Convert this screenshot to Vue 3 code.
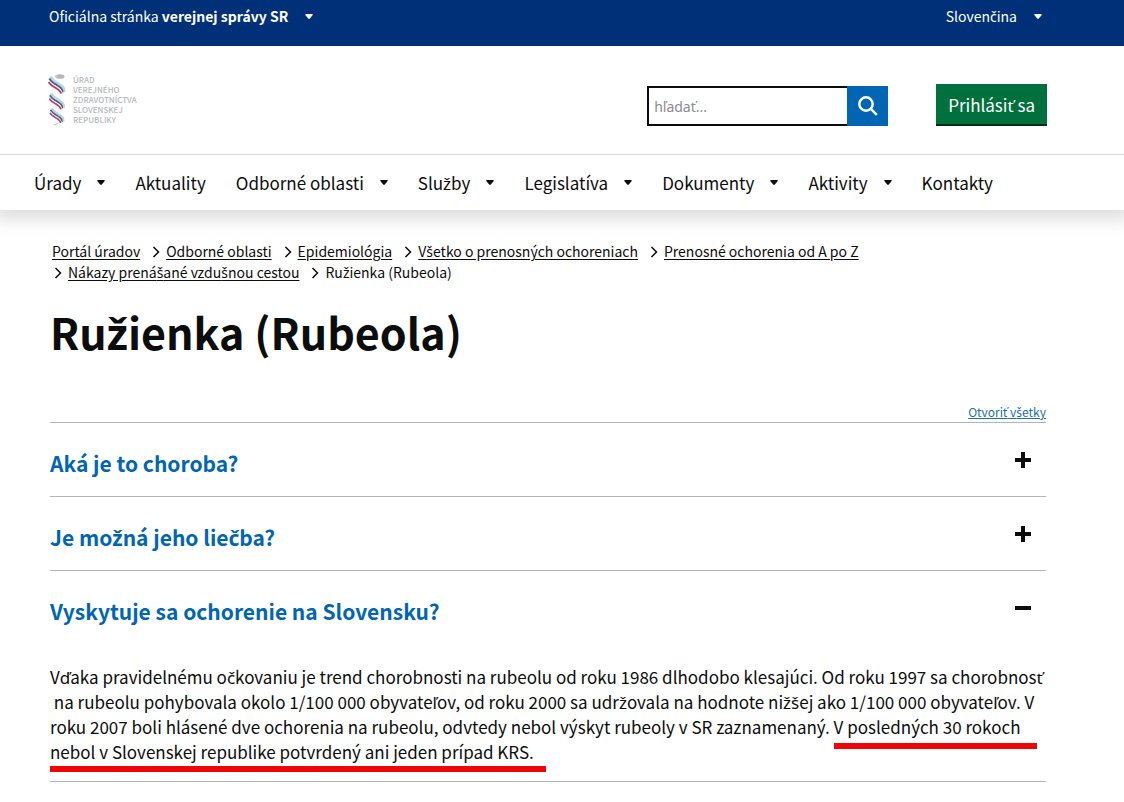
<script setup>
import { ref, h } from 'vue'

// The Latin set of the main face has no letters with a caron:
// those letters are set in a companion face of the same proportions.
const T = (props) =>
  props.s
    .split(/([čďěľňřšťžČĎĽŇŠŤŽ]+)/)
    .map((part, i) => (i % 2 ? h('span', { class: 'caron' }, part) : part))
T.props = ['s']

const query = ref('')

const menu = [
  { label: 'Úrady', sub: true },
  { label: 'Aktuality', sub: false },
  { label: 'Odborné oblasti', sub: true },
  { label: 'Služby', sub: true },
  { label: 'Legislatíva', sub: true },
  { label: 'Dokumenty', sub: true },
  { label: 'Aktivity', sub: true },
  { label: 'Kontakty', sub: false },
]

const crumbs = [
  'Portál úradov',
  'Odborné oblasti',
  'Epidemiológia',
  'Všetko o prenosných ochoreniach',
  'Prenosné ochorenia od A po Z',
  'Nákazy prenášané vzdušnou cestou',
]

const sections = ref([
  { title: 'Aká je to choroba?', open: false },
  { title: 'Je možná jeho liečba?', open: false },
  { title: 'Vyskytuje sa ochorenie na Slovensku?', open: true },
])

const answer = [
  'Vďaka pravidelnému očkovaniu je trend chorobnosti na rubeolu od roku 1986 dlhodobo klesajúci. Od roku 1997 sa chorobnosť',
  '\u00a0na rubeolu pohybovala okolo 1/100 000 obyvateľov, od roku 2000 sa udržovala na hodnote nižšej ako 1/100 000 obyvateľov. V',
]
</script>

<template>
  <div class="page">
    <div class="topbar">
      <button type="button" class="top-button">
        <span>Oficiálna stránka <b>verejnej správy SR</b></span>
        <svg class="caret" viewBox="0 0 8 5"><path d="M1 0h6q1.500 0 .5 1.200L4.800 4.500q-.8.800-1.600 0L.5 1.200Q-.5 0 1 0z" /></svg>
      </button>
      <button type="button" class="top-button">
        <span><T s="Slovenčina" /></span>
        <svg class="caret" viewBox="0 0 8 5"><path d="M1 0h6q1.500 0 .5 1.200L4.800 4.500q-.8.800-1.600 0L.5 1.200Q-.5 0 1 0z" /></svg>
      </button>
    </div>

    <header class="header">
      <a href="#" class="logo">
        <svg class="emblem" viewBox="0 0 18 52">
          <ellipse cx="12" cy="2.500" rx="4.500" ry="2.300" fill="#b4b8ba" />
          <path d="M7 1.500Q10 .5 9.500 2.500T7 3.500z" fill="#c6c9cb" />
          <g v-for="(y, i) in [0, 17, 32]" :key="y" :transform="`translate(${i * 0.7} ${y}) scale(${1 - i * 0.07})`" fill="none">
            <path d="M2.800 2.500C3.500 6 6.500 7.500 10.500 10s6 4 5.300 8" stroke="#bcd3e2" stroke-width="3.200" />
            <path d="M1.500 4.500C2.500 8 5.500 9.200 9.200 11.500s5.500 3.500 5.300 7" stroke="#3f608c" stroke-width="2" />
            <path d="M1 6.500c.8 2.600 3.600 3.800 7.200 6s5.300 3.300 5.500 6.500" stroke="#eef1f5" stroke-width="1.200" />
            <path d="M.8 8c.8 2.600 3.400 3.800 6.700 5.800s5.300 3 5.500 6" stroke="#b83f62" stroke-width="1.800" />
          </g>
          <path d="M10 49q-2 1.600-4 2" stroke="#bfc3c5" fill="none" />
        </svg>
        <span class="logo-text">ÚRAD<br>VEREJNÉHO<br>ZDRAVOTNÍCTVA<br>SLOVENSKEJ<br>REPUBLIKY</span>
      </a>
      <form class="search" role="search" @submit.prevent>
        <input v-model="query" type="text" placeholder="hľadať..." aria-label="hľadať">
        <button type="submit" aria-label="Hľadať">
          <svg viewBox="0 0 20 20"><circle cx="8" cy="8" r="6.700" /><path d="M12.800 12.800l6 6" /></svg>
        </button>
      </form>
      <button type="button" class="login"><T s="Prihlásiť sa" /></button>
    </header>

    <nav class="menu">
      <template v-for="item in menu" :key="item.label">
        <button v-if="item.sub" type="button" class="menu-item">
          <span><T :s="item.label" /></span>
          <svg class="caret" viewBox="0 0 8 5"><path d="M1 0h6q1.500 0 .5 1.200L4.800 4.500q-.8.800-1.600 0L.5 1.200Q-.5 0 1 0z" /></svg>
        </button>
        <a v-else href="#" class="menu-item">{{ item.label }}</a>
      </template>
    </nav>

    <main class="content">
      <ol class="crumbs">
        <li v-for="(crumb, i) in crumbs" :key="crumb">
          <svg v-if="i > 0" class="chevron" viewBox="0 0 8 12"><path d="M1.500 1l5 5-5 5" /></svg>
          <a href="#"><T :s="crumb" /></a>
        </li>
        <li>
          <svg class="chevron" viewBox="0 0 8 12"><path d="M1.500 1l5 5-5 5" /></svg>
          <span><T s="Ružienka (Rubeola)" /></span>
        </li>
      </ol>

      <h1><T s="Ružienka (Rubeola)" /></h1>

      <div class="controls"><button type="button"><T s="Otvoriť všetky" /></button></div>

      <section v-for="s in sections" :key="s.title" class="section">
        <h2>
          <button type="button" :aria-expanded="s.open" @click="s.open = !s.open">
            <span><T :s="s.title" /></span>
            <svg viewBox="0 0 16 16"><path v-if="!s.open" d="M6 0h4v16H6z" /><path d="M0 6h16v4H0z" /></svg>
          </button>
        </h2>
        <p v-if="s.open">
          <template v-for="line in answer" :key="line"><T :s="line" /><br></template>
          roku 2007 boli hlásené dve ochorenia na rubeolu, odvtedy nebol výskyt rubeoly v SR zaznamenaný. <mark>V posledných 30 rokoch</mark><br><mark class="last">nebol v Slovenskej republike potvrdený ani jeden prípad KRS.</mark>
        </p>
      </section>
    </main>
  </div>
</template>

<style>
body {
  margin: 0;
  background: #fff;
}
.caron {
  font-family: "Noto Sans", sans-serif;
  line-height: 0;
}
</style>

<style scoped>
.page {
  font-family: "Noto Sans CJK SC", "Noto Sans", sans-serif;
  font-size: 17px;
  line-height: 25px;
  color: #0b0c0c;
}
button,
input {
  font: inherit;
  color: inherit;
  margin: 0;
  padding: 0;
  border: 0;
  border-radius: 0;
  background: none;
}
button {
  cursor: pointer;
}
.caret {
  width: 8px;
  height: 5px;
  fill: currentColor;
}
.topbar {
  display: flex;
  justify-content: space-between;
  align-items: flex-start;
  padding: 6px 82px 20px 49px;
  background: #003078;
  color: #fff;
  font-size: 14px;
  line-height: 20px;
}
.top-button {
  display: flex;
  align-items: center;
  gap: 17px;
}
.header {
  display: flex;
  align-items: flex-end;
  padding: 28px 77px 28px 48px;
}
.logo {
  display: flex;
  gap: 7px;
  margin-right: auto;
  color: #b5b8ba;
  text-decoration: none;
}
.emblem {
  width: 18px;
  height: 52px;
}
.logo-text {
  padding-top: 1px;
  font-size: 8px;
  line-height: 10px;
  font-weight: 500;
}
.search {
  display: flex;
  height: 40px;
  margin-right: 48px;
}
.search input {
  box-sizing: border-box;
  width: 200px;
  padding: 0 5px;
  border: 2px solid #0b0c0c;
  border-right: 0;
  font-family: "Noto Sans", sans-serif;
  font-size: 14px;
}
.search input::placeholder {
  color: #8a8c8e;
  opacity: 1;
}
.search button {
  display: grid;
  place-items: center;
  width: 41px;
  background: #0065b3;
}
.search svg {
  width: 20px;
  height: 20px;
  fill: none;
  stroke: #fff;
  stroke-width: 2.500;
}
.login {
  height: 42px;
  padding: 0 12px;
  background: #00703c;
  border-bottom: 2px solid #002d18;
  color: #fff;
}
.menu {
  display: flex;
  gap: 30px;
  padding: 15px 34px;
  border-top: 1px solid #d8dadb;
  box-shadow: 0 4px 16px 6px rgba(0, 0, 0, 0.13);
  clip-path: inset(0 0 -40px 0);
}
.menu-item {
  display: flex;
  align-items: center;
  gap: 16px;
  color: inherit;
  text-decoration: none;
  white-space: nowrap;
}
.content {
  padding: 31px 78px 20px 50px;
}
.crumbs {
  display: flex;
  flex-wrap: wrap;
  margin: 0;
  padding: 0 2px;
  list-style: none;
  font-size: 14px;
  line-height: 21px;
}
.crumbs li {
  display: flex;
  align-items: center;
  margin-right: 10px;
}
.crumbs a {
  color: inherit;
  text-underline-offset: 2px;
}
.chevron {
  width: 8px;
  height: 12px;
  margin: 0 6px 0 2px;
  fill: none;
  stroke: #0b0c0c;
  stroke-width: 1.500;
}
h1 {
  margin: 22px 0 45px;
  font-size: 43px;
  line-height: 52px;
  font-weight: 700;
}
.controls {
  display: flex;
  justify-content: flex-end;
  padding-bottom: 1px;
}
.controls button {
  color: #1d70a8;
  font-size: 12px;
  line-height: 19px;
  text-decoration: underline;
}
.section {
  border-top: 1px solid #b1b4b6;
}
.section:last-child {
  border-bottom: 1px solid #b1b4b6;
}
h2 {
  margin: 0;
  font-size: 21px;
  line-height: 30px;
  font-weight: 700;
  color: #0065b3;
}
h2 button {
  display: flex;
  justify-content: space-between;
  align-items: center;
  width: 100%;
  padding: 25px 15px 18px 0;
  text-align: left;
}
h2 svg {
  width: 16px;
  height: 16px;
  margin-bottom: 6px;
  fill: #0b0c0c;
}
p {
  margin: 20px 0 17px;
}
mark {
  position: relative;
  background: none;
  color: inherit;
}
mark::after {
  content: "";
  position: absolute;
  left: 0;
  right: -17px;
  bottom: -10px;
  height: 6px;
  background: #ee0606;
}
mark.last::after {
  right: -12px;
  bottom: -8px;
}
</style>
